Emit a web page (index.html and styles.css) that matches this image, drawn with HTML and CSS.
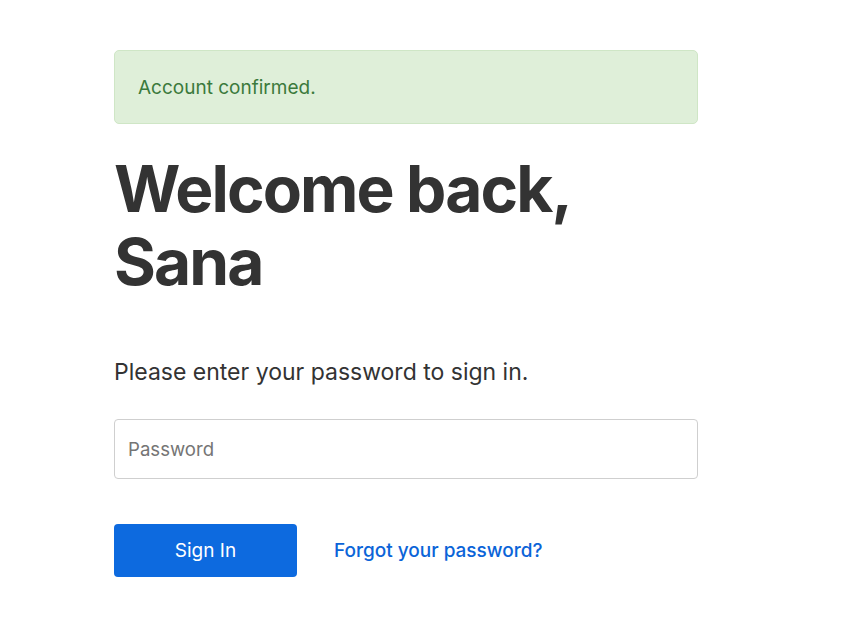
FILE: index.html
```html
<!DOCTYPE html>
<html lang="en">
<head>
<meta charset="utf-8">
<title>Sign in</title>
<link rel="stylesheet" href="styles.css">
</head>
<body>
<main class="page">
  <div class="alert">Account confirmed.</div>
  <h1 class="title">Welcome back,<br>Sana</h1>
  <p class="lead">Please enter your password to sign in.</p>
  <form class="form">
    <input class="field" type="password" placeholder="Password">
    <div class="actions">
      <button class="btn" type="button">Sign In</button>
      <a class="link" href="#">Forgot your password?</a>
    </div>
  </form>
</main>
</body>
</html>
```

FILE: styles.css
```css
* { box-sizing: border-box; }
html, body { margin: 0; padding: 0; background: #fff; }
body {
  font-family: Inter, "Liberation Sans", sans-serif;
  color: #333;
}
.page {
  width: 584px;
  margin-left: 114px;
  padding-top: 50px;
}
.alert {
  height: 74px;
  display: flex;
  align-items: center;
  padding: 0 23px;
  background: #dfefd9;
  border: 1px solid #cfe6c6;
  border-radius: 5px;
  color: #3b7a3c;
  font-size: 19px;
}
.title {
  margin: 28px 0 0;
  font-size: 64px;
  line-height: 73px;
  font-weight: 700;
  color: #333;
  letter-spacing: -1.9px;
}
.lead {
  margin: 59px 0 0;
  font-size: 23px;
  line-height: 30px;
  color: #333;
}
.form { margin-top: 32px; }
.field {
  display: block;
  width: 100%;
  height: 60px;
  padding: 0 13px;
  border: 1px solid #cfcfcf;
  border-radius: 4px;
  font-family: inherit;
  font-size: 18.6px;
  color: #333;
  outline: none;
}
.field::placeholder { color: #757575; }
.actions {
  margin-top: 45px;
  display: flex;
  align-items: center;
  gap: 37px;
}
.btn {
  width: 183px;
  height: 53px;
  border: 0;
  border-radius: 4px;
  background: #0d6adf;
  color: #fff;
  font-family: inherit;
  font-size: 19px;
}
.link {
  color: #0b64d8;
  font-size: 19px;
  font-weight: 500;
  text-decoration: none;
}
```
